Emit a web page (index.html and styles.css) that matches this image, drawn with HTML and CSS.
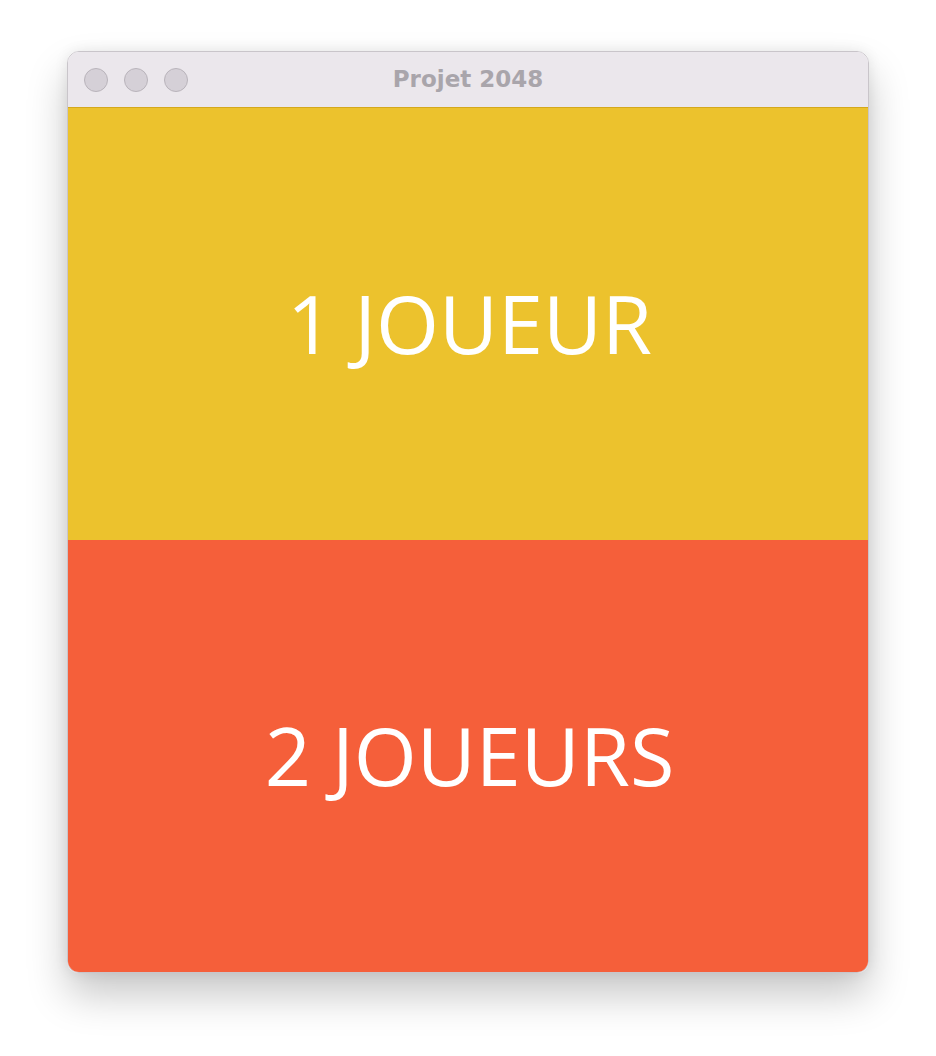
FILE: index.html
```html
<!DOCTYPE html>
<html lang="fr">
<head>
<meta charset="utf-8">
<title>Projet 2048</title>
<link rel="stylesheet" href="styles.css">
</head>
<body>
<div class="window">
  <div class="titlebar">
    <div class="lights">
      <span class="light"></span>
      <span class="light"></span>
      <span class="light"></span>
    </div>
    <div class="title">Projet 2048</div>
  </div>
  <div class="panel panel-one"><span class="label">1 JOUEUR</span></div>
  <div class="panel panel-two"><span class="label">2 JOUEURS</span></div>
</div>
</body>
</html>
```
FILE: styles.css
```css
html, body {
  margin: 0;
  padding: 0;
  background: #ffffff;
}
body {
  width: 936px;
  height: 1056px;
  overflow: hidden;
  padding-top: 51px;
  padding-left: 67px;
  box-sizing: border-box;
}
.window {
  width: 800px;
  border: 1px solid #c9c5ca;
  border-radius: 12px;
  overflow: hidden;
  display: flex;
  flex-direction: column;
  box-shadow: 0 22px 40px rgba(0, 0, 0, 0.22), 0 0 14px rgba(0, 0, 0, 0.08);
}
.titlebar {
  height: 55px;
  background: #ebe7ec;
  border-bottom: 1px solid #d4a81d;
  display: flex;
  align-items: center;
  position: relative;
}
.lights {
  display: flex;
  gap: 16px;
  padding-left: 16px;
}
.light {
  width: 22px;
  height: 22px;
  border-radius: 50%;
  background: #d5d0d7;
  border: 1px solid #b9b4bb;
}
.title {
  position: absolute;
  left: 0;
  right: 0;
  top: 0;
  bottom: 0;
  display: flex;
  align-items: center;
  justify-content: center;
  font-family: "DejaVu Sans", "Liberation Sans", sans-serif;
  font-weight: bold;
  font-size: 23px;
  color: #a9a5ab;
  padding-bottom: 1px;
}
.panel {
  height: 432px;
  display: flex;
  align-items: center;
  justify-content: center;
}
.panel-one {
  background: #ecc22d;
}
.panel-two {
  background: #f55f3a;
}
.label {
  font-family: "Open Sans", "DejaVu Sans", sans-serif;
  font-size: 81px;
  color: #ffffff;
  padding-bottom: 4px;
  padding-left: 3px;
}
```
